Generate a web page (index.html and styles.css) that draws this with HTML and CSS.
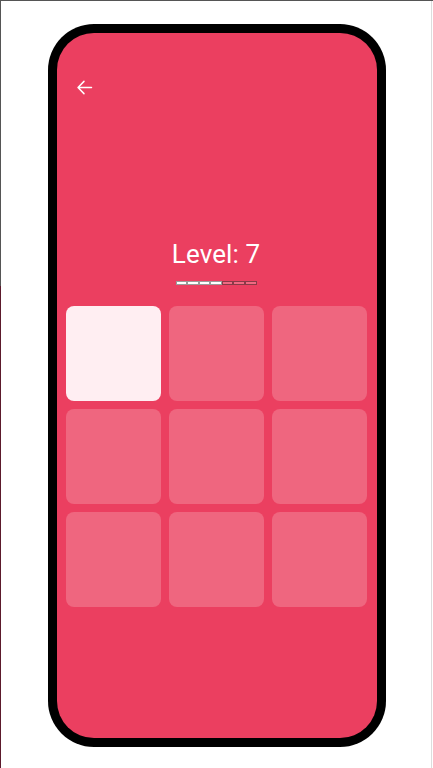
FILE: index.html
```html
<!DOCTYPE html>
<html lang="en">
<head>
<meta charset="utf-8">
<title>Level 7</title>
<link rel="stylesheet" href="styles.css">
</head>
<body>
<div class="page">
  <div class="phone">
    <div class="screen">
      <div class="topbar">
        <svg class="back" viewBox="0 0 24 24" width="21" height="21" aria-label="Back">
          <path d="M20 12H4.8M11.4 5L4.6 12L11.4 19" fill="none" stroke="#fff" stroke-width="1.7" stroke-linecap="round" stroke-linejoin="round"/>
        </svg>
      </div>
      <div class="level">Level: 7</div>
      <div class="progress">
        <span class="seg on"></span><span class="seg on"></span><span class="seg on"></span><span class="seg on"></span><span class="seg"></span><span class="seg"></span><span class="seg"></span>
      </div>
      <div class="grid">
        <div class="tile active"></div>
        <div class="tile"></div>
        <div class="tile"></div>
        <div class="tile"></div>
        <div class="tile"></div>
        <div class="tile"></div>
        <div class="tile"></div>
        <div class="tile"></div>
        <div class="tile"></div>
      </div>
    </div>
  </div>
</div>
</body>
</html>
```
FILE: styles.css
```css
html, body {
  margin: 0;
  padding: 0;
  background: #fff;
}
body {
  font-family: Roboto, "Noto Sans", Arial, sans-serif;
}
.page {
  box-sizing: border-box;
  width: 433px;
  height: 768px;
  border-top: 1px solid #555;
  padding-top: 23px;
  background:
    linear-gradient(#555, #555) 0 0 / 1px 285px no-repeat,
    linear-gradient(#5c1a2c, #5c1a2c) 0 285px / 1px 100% no-repeat,
    linear-gradient(#ddd, #ddd) 431px 0 / 1px 100% no-repeat,
    #fff;
  display: flex;
  justify-content: center;
  align-items: flex-start;
}
.phone {
  box-sizing: border-box;
  width: 338px;
  height: 723px;
  background: #000;
  border-radius: 46px;
  padding: 9px;
}
.screen {
  height: 100%;
  background: #eb3f60;
  border-radius: 37px;
  display: flex;
  flex-direction: column;
  align-items: flex-start;
  padding: 0 10px 0 9px;
}
.topbar {
  align-self: stretch;
  height: 24px;
  margin-top: 42px;
  padding-left: 8px;
  display: flex;
  align-items: center;
}
.back {
  display: block;
}
.level {
  align-self: center;
  margin-top: 140px;
  font-size: 26px;
  line-height: 30px;
  color: #fff;
  letter-spacing: 0.1px;
}
.progress {
  align-self: center;
  margin-top: 12px;
  display: flex;
  width: 81px;
  height: 4px;
}
.seg {
  flex: 1;
  box-sizing: border-box;
  border: 1px solid #8a3a48;
  background: #ef6a82;
}
.seg.on {
  background: #fff;
  border-color: #9a9a9a;
}
.grid {
  margin-top: 21px;
  width: 301px;
  display: grid;
  grid-template-columns: repeat(3, 1fr);
  grid-auto-rows: 95px;
  gap: 8px;
}
.tile {
  border-radius: 8px;
  background: #ef667f;
}
.tile.active {
  background: #ffeef2;
}
```
